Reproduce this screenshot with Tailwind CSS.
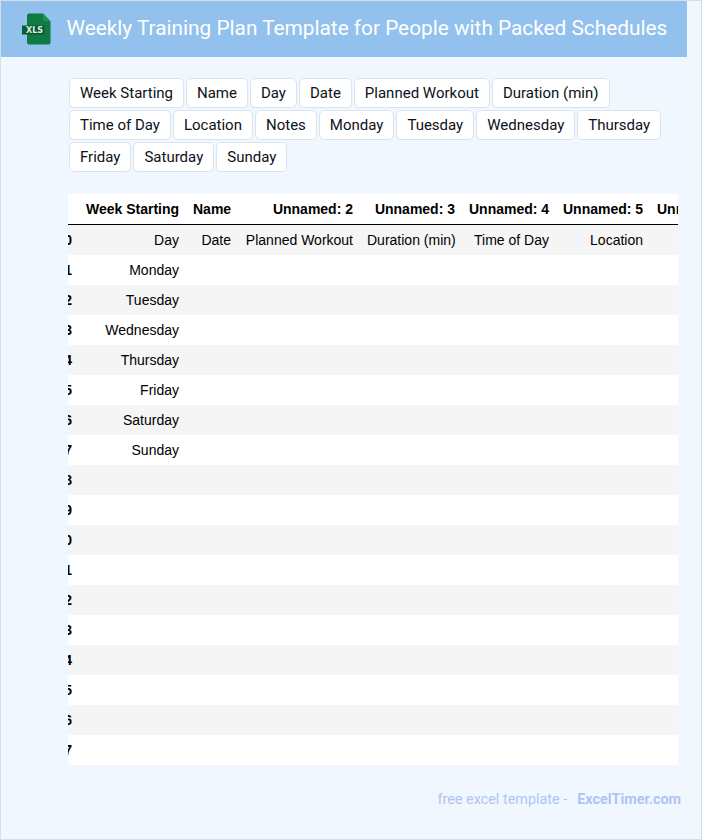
<!DOCTYPE html>
<html>
<head>
<meta charset="utf-8">
<script src="https://cdn.jsdelivr.net/npm/@tailwindcss/browser@4"></script>
</head>
<body class="m-0 bg-[#f0f7ff]">
<div class="w-[702px] h-[840px] overflow-hidden border border-[#d5dfe9] bg-[#f0f7ff] font-['Roboto',sans-serif]">
  <div class="w-[686px]">
    <header class="h-[56px] bg-[#92c1ed] flex items-center">
      <svg class="ml-[21px] w-[29px] h-[32px] shrink-0" viewBox="0 0 29 32" aria-hidden="true">
        <path d="M5 2.500a2 2 0 0 1 2-2h14l7.500 8v21a2 2 0 0 1-2 2H7a2 2 0 0 1-2-2z" fill="#0f7b42"/>
        <path d="M21 .5l7.500 8h-5.500a2 2 0 0 1-2-2z" fill="#1c9154"/>
        <rect x="0" y="12.500" width="22.500" height="9" fill="#0b5a33"/>
        <text x="4" y="20" font-family="'DejaVu Sans',sans-serif" font-size="8" font-weight="700" fill="#dceee3">XLS</text>
      </svg>
      <h1 class="ml-[15.500px] mb-[2px] text-[20.800px] leading-[28px] font-normal text-white whitespace-nowrap">Weekly Training Plan Template for People with Packed Schedules</h1>
    </header>
    <main class="ml-[67px] w-[610px]">
      <div class="pt-[21px] flex flex-wrap gap-[2px] pl-[1px] text-[15px] leading-[20px] text-[#0b1220]">
        <span class="h-[30px] px-[10px] flex items-center bg-white border border-[#dbe4ee] rounded-[5px]">Week Starting</span>
        <span class="h-[30px] px-[10px] flex items-center bg-white border border-[#dbe4ee] rounded-[5px]">Name</span>
        <span class="h-[30px] px-[10px] flex items-center bg-white border border-[#dbe4ee] rounded-[5px]">Day</span>
        <span class="h-[30px] px-[10px] flex items-center bg-white border border-[#dbe4ee] rounded-[5px]">Date</span>
        <span class="h-[30px] px-[10px] flex items-center bg-white border border-[#dbe4ee] rounded-[5px]">Planned Workout</span>
        <span class="h-[30px] px-[10px] flex items-center bg-white border border-[#dbe4ee] rounded-[5px]">Duration (min)</span>
        <span class="h-[30px] px-[10px] flex items-center bg-white border border-[#dbe4ee] rounded-[5px]">Time of Day</span>
        <span class="h-[30px] px-[10px] flex items-center bg-white border border-[#dbe4ee] rounded-[5px]">Location</span>
        <span class="h-[30px] px-[10px] flex items-center bg-white border border-[#dbe4ee] rounded-[5px]">Notes</span>
        <span class="h-[30px] px-[10px] flex items-center bg-white border border-[#dbe4ee] rounded-[5px]">Monday</span>
        <span class="h-[30px] px-[10px] flex items-center bg-white border border-[#dbe4ee] rounded-[5px]">Tuesday</span>
        <span class="h-[30px] px-[10px] flex items-center bg-white border border-[#dbe4ee] rounded-[5px]">Wednesday</span>
        <span class="h-[30px] px-[10px] flex items-center bg-white border border-[#dbe4ee] rounded-[5px]">Thursday</span>
        <span class="h-[30px] px-[10px] flex items-center bg-white border border-[#dbe4ee] rounded-[5px]">Friday</span>
        <span class="h-[30px] px-[10px] flex items-center bg-white border border-[#dbe4ee] rounded-[5px]">Saturday</span>
        <span class="h-[30px] px-[10px] flex items-center bg-white border border-[#dbe4ee] rounded-[5px]">Sunday</span>
      </div>
      <div class="mt-[22px] w-[610px] overflow-hidden bg-white font-['Liberation_Sans',Arial,sans-serif] text-[14px] text-black">
        <table class="-ml-[30px] w-[740px] table-fixed border-separate border-spacing-0 text-right">
          <colgroup>
            <col class="w-[41px]"><col class="w-[107px]"><col class="w-[52px]"><col class="w-[122px]"><col class="w-[102px]"><col class="w-[94px]"><col class="w-[94px]"><col class="w-[128px]">
          </colgroup>
          <thead>
            <tr class="h-[31px]">
              <th class="px-[7px] font-bold border-b border-black"></th><th class="px-[7px] font-bold whitespace-nowrap border-b border-black">Week Starting</th><th class="px-[7px] font-bold border-b border-black">Name</th><th class="px-[7px] font-bold whitespace-nowrap border-b border-black">Unnamed: 2</th><th class="px-[7px] font-bold whitespace-nowrap border-b border-black">Unnamed: 3</th><th class="px-[7px] font-bold whitespace-nowrap border-b border-black">Unnamed: 4</th><th class="px-[7px] font-bold whitespace-nowrap border-b border-black">Unnamed: 5</th><th class="px-[7px] font-bold whitespace-nowrap text-left border-b border-black">Unnamed: 6</th>
            </tr>
          </thead>
          <tbody>
            <tr class="h-[30px] bg-[#f5f5f5]"><th class="px-[7px] font-bold">0</th><td class="px-[7px]">Day</td><td class="px-[7px]">Date</td><td class="px-[7px] whitespace-nowrap">Planned Workout</td><td class="px-[7px] whitespace-nowrap">Duration (min)</td><td class="px-[7px] whitespace-nowrap">Time of Day</td><td class="px-[7px]">Location</td><td></td></tr>
            <tr class="h-[30px]"><th class="px-[7px] font-bold">1</th><td class="px-[7px]">Monday</td><td colspan="6"></td></tr>
            <tr class="h-[30px] bg-[#f5f5f5]"><th class="px-[7px] font-bold">2</th><td class="px-[7px]">Tuesday</td><td colspan="6"></td></tr>
            <tr class="h-[30px]"><th class="px-[7px] font-bold">3</th><td class="px-[7px]">Wednesday</td><td colspan="6"></td></tr>
            <tr class="h-[30px] bg-[#f5f5f5]"><th class="px-[7px] font-bold">4</th><td class="px-[7px]">Thursday</td><td colspan="6"></td></tr>
            <tr class="h-[30px]"><th class="px-[7px] font-bold">5</th><td class="px-[7px]">Friday</td><td colspan="6"></td></tr>
            <tr class="h-[30px] bg-[#f5f5f5]"><th class="px-[7px] font-bold">6</th><td class="px-[7px]">Saturday</td><td colspan="6"></td></tr>
            <tr class="h-[30px]"><th class="px-[7px] font-bold">7</th><td class="px-[7px]">Sunday</td><td colspan="6"></td></tr>
            <tr class="h-[30px] bg-[#f5f5f5]"><th class="px-[7px] font-bold">8</th><td colspan="7"></td></tr>
            <tr class="h-[30px]"><th class="px-[7px] font-bold">9</th><td colspan="7"></td></tr>
            <tr class="h-[30px] bg-[#f5f5f5]"><th class="px-[7px] font-bold">10</th><td colspan="7"></td></tr>
            <tr class="h-[30px]"><th class="px-[7px] font-bold">11</th><td colspan="7"></td></tr>
            <tr class="h-[30px] bg-[#f5f5f5]"><th class="px-[7px] font-bold">12</th><td colspan="7"></td></tr>
            <tr class="h-[30px]"><th class="px-[7px] font-bold">13</th><td colspan="7"></td></tr>
            <tr class="h-[30px] bg-[#f5f5f5]"><th class="px-[7px] font-bold">14</th><td colspan="7"></td></tr>
            <tr class="h-[30px]"><th class="px-[7px] font-bold">15</th><td colspan="7"></td></tr>
            <tr class="h-[30px] bg-[#f5f5f5]"><th class="px-[7px] font-bold">16</th><td colspan="7"></td></tr>
            <tr class="h-[30px]"><th class="px-[7px] font-bold">17</th><td colspan="7"></td></tr>
          </tbody>
        </table>
      </div>
      <footer class="mt-[25px] h-[20px] leading-[20px] text-[14.400px] text-right whitespace-nowrap text-[#b0c4f2] -mr-[3px]">
        free excel template - <span class="ml-[6.500px] font-bold">ExcelTimer.com</span>
      </footer>
    </main>
  </div>
</div>
</body>
</html>
